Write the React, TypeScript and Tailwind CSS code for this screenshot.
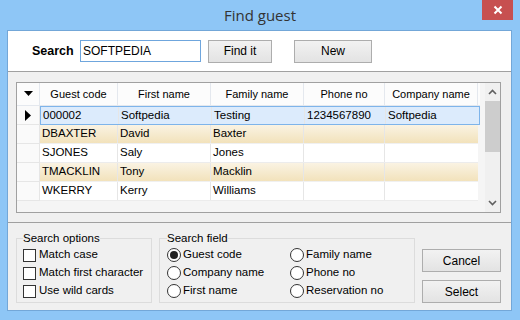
import { FC } from "react";

interface GuestEntity {
  code: string;
  firstName: string;
  familyName: string;
  phone: string;
  company: string;
}

const guests: GuestEntity[] = [
  { code: "000002", firstName: "Softpedia", familyName: "Testing", phone: "1234567890", company: "Softpedia" },
  { code: "DBAXTER", firstName: "David", familyName: "Baxter", phone: "", company: "" },
  { code: "SJONES", firstName: "Saly", familyName: "Jones", phone: "", company: "" },
  { code: "TMACKLIN", firstName: "Tony", familyName: "Macklin", phone: "", company: "" },
  { code: "WKERRY", firstName: "Kerry", familyName: "Williams", phone: "", company: "" },
];

const columns = [
  { title: "Guest code", w: "w-[78px]" },
  { title: "First name", w: "w-[93px]" },
  { title: "Family name", w: "w-[93px]" },
  { title: "Phone no", w: "w-[81px]" },
  { title: "Company name", w: "w-[93px]" },
];

const WinButton: FC<{ label: string; className: string }> = ({ label, className }) => (
  <button
    className={`border border-[#adadad] bg-gradient-to-b from-[#f2f2f2] to-[#e3e3e3] text-[12px] text-black ${className}`}
  >
    {label}
  </button>
);

const CheckItem: FC<{ label: string }> = ({ label }) => (
  <div className="flex items-center h-[18px] gap-[3px] whitespace-nowrap">
    <span className="w-[13px] h-[13px] shrink-0 border border-[#333] bg-white" />
    <span>{label}</span>
  </div>
);

const RadioItem: FC<{ label: string; checked?: boolean }> = ({ label, checked }) => (
  <div className="flex items-center h-[18px] gap-[2px] whitespace-nowrap">
    <span className="w-[14px] h-[14px] shrink-0 rounded-full border border-[#333] bg-white flex items-center justify-center">
      {checked && <span className="w-[8px] h-[8px] rounded-full bg-[#222]" />}
    </span>
    <span>{label}</span>
  </div>
);

const App: FC = () => {
  return (
    <div
      className="w-[520px] h-[320px] bg-[#8ec6f6] flex flex-col text-[11px] text-black overflow-hidden"
      style={{ fontFamily: '"Liberation Sans", Arial, sans-serif' }}
    >
      {/* title bar */}
      <div className="h-[30px] flex">
        <div className="w-[38px]" />
        <div
          className="flex-1 text-center pt-[4px] text-[15px] text-[#333]"
          style={{ fontFamily: '"Open Sans", "Noto Sans", sans-serif' }}
        >
          Find guest
        </div>
        <div className="w-[31px] h-[20px] mr-[7px] bg-[#c75050] flex items-center justify-center">
          <svg width="10" height="10" viewBox="0 0 10 10">
            <path d="M1.5 1.5 L8.5 8.5 M8.5 1.5 L1.5 8.5" stroke="#fff" strokeWidth="2" />
          </svg>
        </div>
      </div>

      {/* client */}
      <div className="ml-[7px] mr-[8px] h-[281px] border border-[#73a7d8] bg-[#f0f0f0] flex flex-col">
        {/* search row */}
        <div className="h-[41px] bg-white border-b border-[#a0a0a0] flex items-center">
          <span className="ml-[24px] w-[48px] font-bold text-[12.5px]">Search</span>
          <div className="w-[121px] h-[22px] border border-[#6fa6dd] flex items-center pl-[2px] text-[12px] mt-[-1px]">
            SOFTPEDIA
          </div>
          <WinButton label="Find it" className="ml-[7px] w-[64px] h-[23px]" />
          <WinButton label="New" className="ml-[22px] w-[78px] h-[23px]" />
        </div>

        {/* grid area */}
        <div className="h-[151px] border-b border-[#a0a0a0] pt-[10px] pl-[8px]">
          <div className="w-[485px] h-[131px] border border-[#a0a0a0] bg-[#f5f5f5] flex">
            <div className="flex flex-col">
              {/* header */}
              <div className="flex h-[23px] bg-[#fcfcfc] border-b border-[#e4e8ee]">
                <div className="w-[23px] border-r border-[#e4e8ee] flex items-center justify-center">
                  <svg width="9" height="6" viewBox="0 0 9 6">
                    <path d="M0 0 H9 L4.5 5 Z" fill="#000" />
                  </svg>
                </div>
                {columns.map((c) => (
                  <div
                    key={c.title}
                    className={`${c.w} border-r border-[#e4e8ee] flex items-center justify-center`}
                  >
                    {c.title}
                  </div>
                ))}
              </div>
              {/* rows */}
              {guests.map((g, i) => {
                const selected = i === 0;
                const beige = i % 2 === 1;
                const cells = [g.code, g.firstName, g.familyName, g.phone, g.company];
                return (
                  <div key={g.code} className="flex h-[19px]">
                    <div className="w-[23px] bg-[#fafafa] border-r border-b border-[#e6e6e6] flex items-center justify-center">
                      {selected && (
                        <svg width="6" height="11" viewBox="0 0 6 11">
                          <path d="M0 0 L6 5.5 L0 11 Z" fill="#000" />
                        </svg>
                      )}
                    </div>
                    <div
                      className={`flex ${
                        selected
                          ? "bg-[#dcebfc] border border-[#7eb4ea]"
                          : beige
                          ? "bg-gradient-to-b from-[#faf3e3] to-[#f2e2bb] border-b border-[#f0f0f0]"
                          : "bg-white border-b border-[#ececec]"
                      }`}
                    >
                      {cells.map((v, j) => (
                        <div
                          key={j}
                          className={`${columns[j].w} ${
                            j === 0 && selected ? "w-[77px]" : ""
                          } ${
                            j === 4 && selected ? "w-[92px]" : ""
                          } border-r ${
                            j === 4 ? "border-transparent" : "border-[#e6e6e6]"
                          } flex items-center pl-[2px] whitespace-nowrap text-[11.5px]`}
                        >
                          {v}
                        </div>
                      ))}
                    </div>
                  </div>
                );
              })}
            </div>
            {/* scrollbar */}
            <div className="ml-[5px] w-[17px] bg-[#f0f0f0] flex flex-col items-center">
              <div className="h-[18px] flex items-center justify-center">
                <svg width="9" height="6" viewBox="0 0 9 6">
                  <path d="M1 5 L4.5 1.5 L8 5" stroke="#606060" strokeWidth="1.6" fill="none" />
                </svg>
              </div>
              <div className="w-[15px] h-[51px] bg-[#cdcdcd]" />
              <div className="flex-1" />
              <div className="h-[18px] flex items-center justify-center">
                <svg width="9" height="6" viewBox="0 0 9 6">
                  <path d="M1 1 L4.5 4.5 L8 1" stroke="#606060" strokeWidth="1.6" fill="none" />
                </svg>
              </div>
            </div>
          </div>
        </div>

        {/* bottom options */}
        <div className="flex-1 flex pl-[8px] pt-[8px] text-[11.5px]">
          <fieldset className="w-[136px] h-[72px] border border-[#dcdcdc] px-[6px]">
            <legend className="px-0 leading-[14px]">Search options</legend>
            <div className="mt-[1px]">
              <CheckItem label="Match case" />
              <CheckItem label="Match first character" />
              <CheckItem label="Use wild cards" />
            </div>
          </fieldset>
          <fieldset className="ml-[7px] w-[256px] h-[72px] border border-[#dcdcdc] px-[7px]">
            <legend className="px-0 leading-[14px]">Search field</legend>
            <div className="flex mt-[1px]">
              <div className="w-[123px]">
                <RadioItem label="Guest code" checked />
                <RadioItem label="Company name" />
                <RadioItem label="First name" />
              </div>
              <div>
                <RadioItem label="Family name" />
                <RadioItem label="Phone no" />
                <RadioItem label="Reservation no" />
              </div>
            </div>
          </fieldset>
          <div className="ml-[7px] pt-[18px] flex flex-col gap-[8px]">
            <WinButton label="Cancel" className="w-[79px] h-[23px]" />
            <WinButton label="Select" className="w-[79px] h-[23px]" />
          </div>
        </div>
      </div>
    </div>
  );
};

export default App;
